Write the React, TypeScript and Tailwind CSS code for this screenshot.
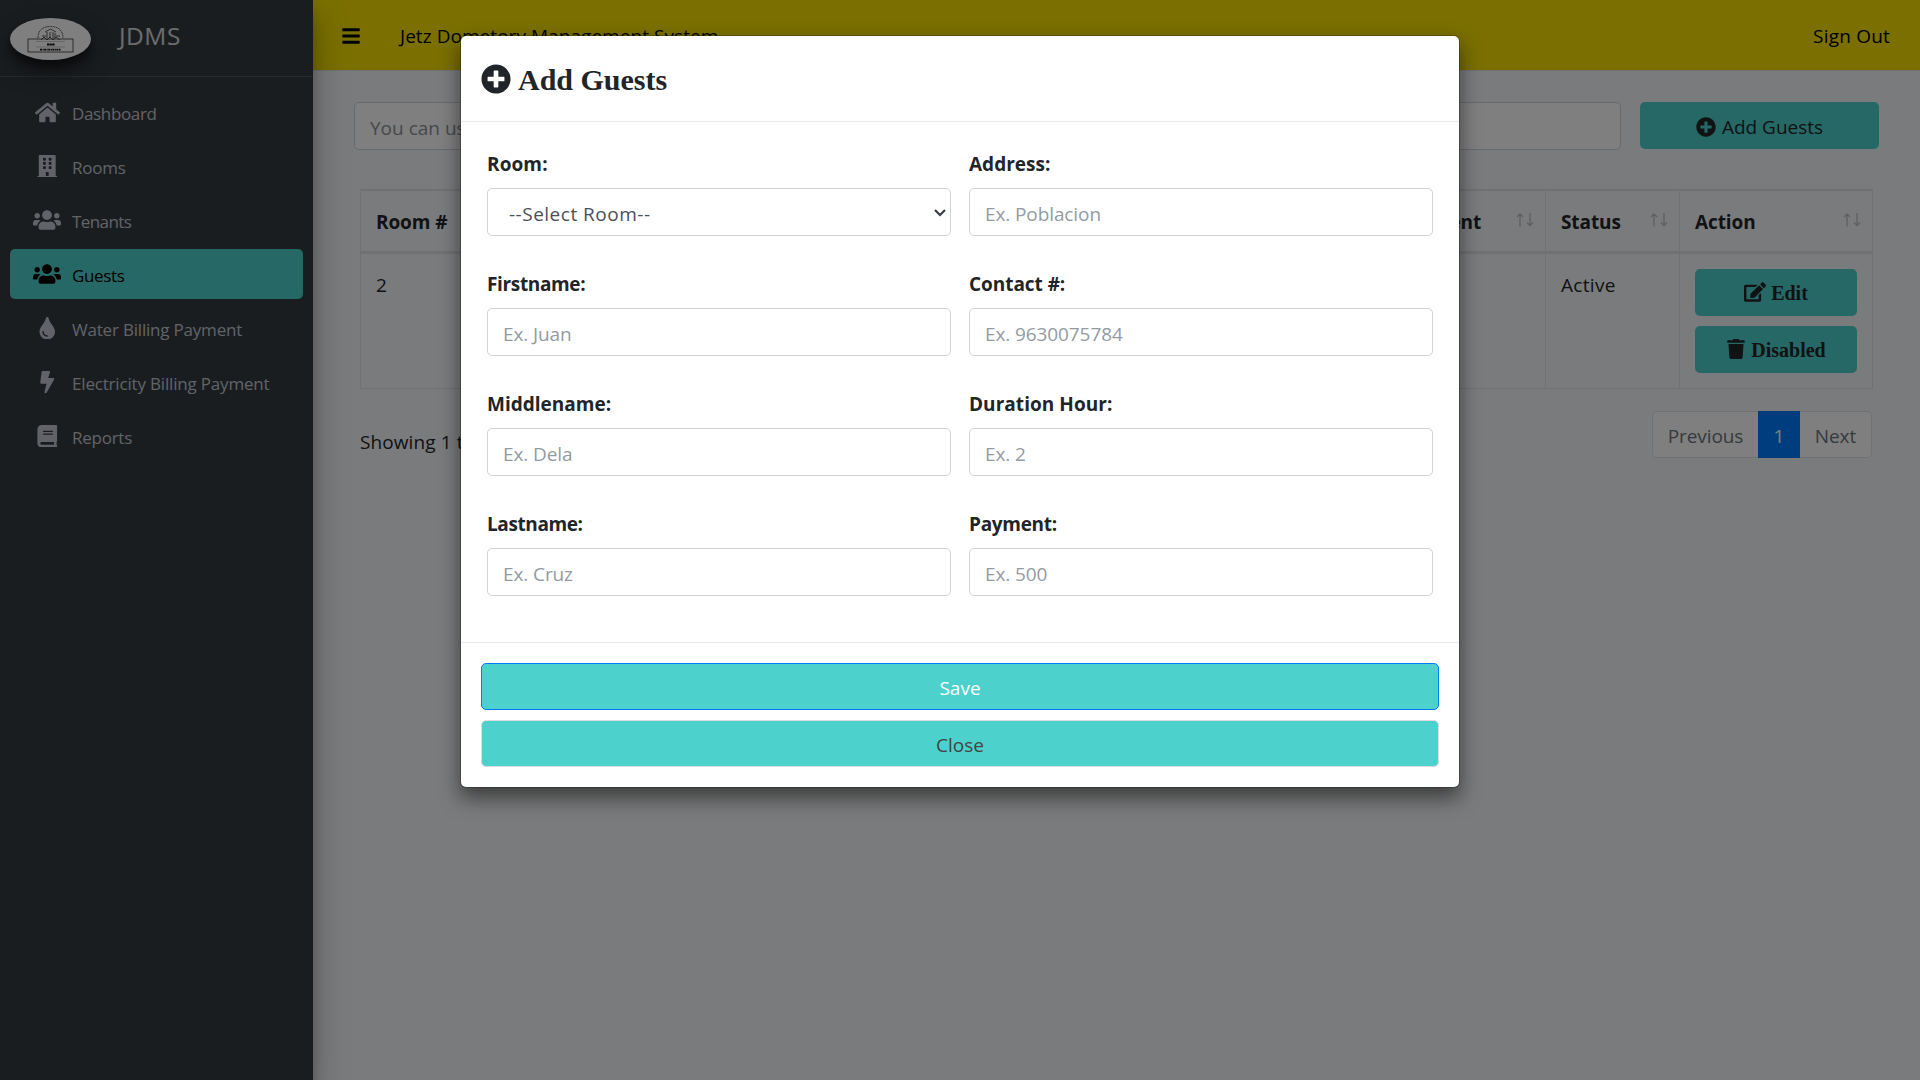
import type { ReactNode } from "react";
import {
  FaBars,
  FaBolt,
  FaBook,
  FaBuilding,
  FaEdit,
  FaHome,
  FaPlusCircle,
  FaTint,
  FaTrash,
  FaUsers,
} from "react-icons/fa";

const navItems: { label: string; icon: ReactNode; spacing: string; active?: boolean }[] = [
  { label: "Dashboard", icon: <FaHome size={25} />, spacing: "tracking-[-0.35px]" },
  { label: "Rooms", icon: <FaBuilding size={22.5} />, spacing: "tracking-[-0.25px]" },
  { label: "Tenants", icon: <FaUsers size={28} />, spacing: "tracking-[-0.6px]" },
  { label: "Guests", icon: <FaUsers size={28} />, spacing: "tracking-[-0.35px]", active: true },
  { label: "Water Billing Payment", icon: <FaTint size={22.5} />, spacing: "tracking-[-0.2px]" },
  { label: "Electricity Billing Payment", icon: <FaBolt size={22.5} />, spacing: "tracking-[-0.18px]" },
  { label: "Reports", icon: <FaBook size={22.5} />, spacing: "tracking-[-0.25px]" },
];

function Logo() {
  return (
    <div className="flex h-[42px] w-[81px] items-center justify-center rounded-[50%] bg-white shadow-[0_12px_24px_rgba(0,0,0,0.4),0_7px_8px_rgba(0,0,0,0.46)]">
      <svg width="47" height="28" viewBox="0 0 47 28" fill="none" stroke="#333" strokeWidth="0.8">
        <path d="M11 13C11 5 16 1.5 23.500 1.500S36 5 36 13" strokeDasharray="2 0.7" />
        <path d="M18 7l5.500-3 5.500 3M20 7v6M23 7v6M26 7v6M28 8v5M15 11h4M29 11h4" />
        <path d="M14 15l3-3 3 3 3-3 3 3 3-3 4 3" />
        <rect x="1" y="14" width="45" height="13" />
        <path d="M9 16.500h29M9 22h29" stroke="#999" strokeWidth="0.5" />
        <path d="M20 19.500h8" stroke="#111" strokeWidth="2.200" strokeDasharray="2.200 0.400" />
        <path d="M13 24.700h21" stroke="#111" strokeWidth="1.800" strokeDasharray="2 0.600 1 0.500" />
      </svg>
    </div>
  );
}

function Sidebar() {
  return (
    <aside className="relative z-10 h-full w-[313px] shrink-0 bg-[#343a40] shadow-[0_17px_35px_rgba(0,0,0,0.25),0_12px_12px_rgba(0,0,0,0.22)]">
      <div className="flex h-[77px] items-center border-b border-[#4b545c] pl-[10px]">
        <div className="pt-[2px]">
          <Logo />
        </div>
        <span className="pb-[4px] pl-[28px] text-[24.500px] tracking-[0.5px] text-white/80">JDMS</span>
      </div>
      <nav className="mt-[10px] flex flex-col gap-1 px-[10px]">
        {navItems.map((item) => (
          <div
            key={item.label}
            className={
              item.active
                ? "flex h-[50px] items-center rounded-[5px] bg-[#4cd1cc] pl-[20px] text-black"
                : "flex h-[50px] items-center pl-[20px] text-[#c2c7d0]"
            }
          >
            <span className="flex w-[34px] justify-center">{item.icon}</span>
            <span className={`pt-[3px] pl-[8px] text-[17px] ${item.spacing}`}>{item.label}</span>
          </div>
        ))}
      </nav>
    </aside>
  );
}

function SortArrows() {
  return (
    <svg width="18" height="14" viewBox="0 0 18 14" fill="none" stroke="#bcbec1" strokeWidth="1.300">
      <path d="M4 13.500V1M1 4l3-3 3 3M14 0v12.500M11 9.500l3 3 3-3" />
    </svg>
  );
}

const columns = ["Room #", "Fullname", "Address", "Contact #", "Duration Hour", "Payment", "Status", "Action"];
const cells = ["2", "", "", "", "", "", "Active"];

function GuestTable() {
  return (
    <div className="mt-[39px] ml-[6px] grid w-[1513px] grid-cols-[160px_220px_220px_210px_211px_164px_134px_193px] border-t-2 border-l border-[#dee2e6]">
      {columns.map((c) => (
        <div
          key={c}
          className="flex h-[63px] items-center justify-between border-r border-b-[3px] border-[#dee2e6] pr-[11px] pl-[15px]"
        >
          <span className="pt-[2px] text-[19px] font-bold tracking-[-0.1px]">{c}</span>
          <span className="-mt-[2px]">
            <SortArrows />
          </span>
        </div>
      ))}
      {cells.map((c, i) => (
        <div key={i} className="h-[135px] border-r border-b border-[#dee2e6] pt-[17px] pl-[15px] text-[19px] tracking-[0.3px]">
          {c}
        </div>
      ))}
      <div className="flex h-[135px] flex-col gap-[10px] border-r border-b border-[#dee2e6] pt-[15px] pr-[15px] pl-[15px] font-['Liberation_Serif',serif] text-[20px] font-bold">
        <button className="flex h-[47px] items-center justify-center gap-[5px] rounded-[5px] bg-[#4cd1cc]">
          <FaEdit size={22} className="-mt-[2px]" /> <span className="pt-[1px]">Edit</span>
        </button>
        <button className="flex h-[47px] items-center justify-center gap-[5px] rounded-[5px] bg-[#4cd1cc]">
          <FaTrash size={20} className="-mt-[2px]" /> <span className="pt-[1px]">Disabled</span>
        </button>
      </div>
    </div>
  );
}

function Page() {
  return (
    <div className="flex min-w-0 flex-1 flex-col">
      <header className="flex h-[71px] items-center border-b border-[#dee2e6] bg-[#f4de00] pr-[30px] pl-[28px] text-[19px] text-black">
        <FaBars size={20} className="mt-[1px]" />
        <span className="flex-1 pt-[2px] pl-[39px] tracking-[0.05px]">Jetz Dometory Management System</span>
        <span className="pt-[2px] tracking-[0.2px]">Sign Out</span>
      </header>
      <main className="pt-[31px] pl-[41px]">
        <div className="flex items-start gap-[19px]">
          <div className="flex h-[48px] w-[1267px] items-center rounded-[5px] border border-[#ced4da] bg-white pt-[5px] pl-[15px] text-[19px] text-[#8b9299]">
            You can use this search
          </div>
          <button className="flex h-[47px] w-[239px] items-center justify-center gap-[6px] rounded-[5px] bg-[#4cd1cc] text-[19px]">
            <FaPlusCircle size={20} className="mt-[2px]" />
            <span className="pt-[4px]">Add Guests</span>
          </button>
        </div>
        <GuestTable />
        <div className="flex w-[1518px] justify-between pt-[22px] pl-[6px] text-[19px]">
          <span className="pt-[17px] tracking-[0.1px]">Showing 1 to 1 of 1 entries</span>
          <div className="flex h-[47px] text-[#6c757d]">
            <span className="flex w-[106px] items-center justify-center rounded-l-[5px] border border-r-0 border-[#dee2e6] bg-white pt-[3px] tracking-[-0.1px]">
              Previous
            </span>
            <span className="flex w-[42px] items-center justify-center bg-[#007bff] pt-[3px] text-white">1</span>
            <span className="flex w-[72px] items-center justify-center rounded-r-[5px] border border-l-0 border-[#dee2e6] bg-white pt-[3px]">
              Next
            </span>
          </div>
        </div>
      </main>
    </div>
  );
}

const fields = [
  { label: "Room:", hint: "--Select Room--", spacing: "tracking-[0.1px]", select: true },
  { label: "Address:", hint: "Ex. Poblacion", spacing: "tracking-[0px]" },
  { label: "Firstname:", hint: "Ex. Juan", spacing: "tracking-[-0.35px]" },
  { label: "Contact #:", hint: "Ex. 9630075784", spacing: "tracking-[-0.05px]" },
  { label: "Middlename:", hint: "Ex. Dela", spacing: "tracking-[0px]" },
  { label: "Duration Hour:", hint: "Ex. 2", spacing: "tracking-[0.05px]" },
  { label: "Lastname:", hint: "Ex. Cruz", spacing: "tracking-[-0.4px]" },
  { label: "Payment:", hint: "Ex. 500", spacing: "tracking-[-0.3px]" },
];

function AddGuestsModal() {
  return (
    <div className="h-[753px] w-[1000px] rounded-[6px] border border-black/20 bg-white bg-clip-padding shadow-[0_10px_20px_rgba(0,0,0,0.5)]">
      <div className="flex h-[86px] items-center gap-[7px] border-b border-[#e9ecef] pl-[20px] font-['Liberation_Serif',serif] text-[30px] font-bold">
        <FaPlusCircle size={30} />
        <span className="pt-[2px]">Add Guests</span>
      </div>
      <div className="grid h-[520px] grid-cols-[464px_464px] content-start gap-x-[18px] pt-[28px] pl-[26px]">
        {fields.map((f) => (
          <div key={f.label} className="h-[120px] text-[19px]">
            <div className={`h-[38px] font-bold ${f.spacing}`}>{f.label}</div>
            {f.select ? (
              <div className="flex h-[48px] items-center justify-between rounded-[5px] border border-[#ced4da] pt-[4px] pr-[4px] pl-[21px] tracking-[0.5px] text-[#495057]">
                {f.hint}
                <svg width="12" height="8" viewBox="0 0 12 8" className="-mt-[3px]" fill="none" stroke="#343a40" strokeWidth="2">
                  <path d="M1 1l5 5 5-5" />
                </svg>
              </div>
            ) : (
              <div className="flex h-[48px] items-center rounded-[5px] border border-[#ced4da] pt-[4px] pl-[15px] tracking-[-0.1px] text-[#939ba2]">
                {f.hint}
              </div>
            )}
          </div>
        ))}
      </div>
      <div className="flex flex-col gap-[10px] border-t border-[#e9ecef] px-[20px] pt-[20px] text-[19px]">
        <button className="h-[47px] rounded-[5px] border border-[#007bff] bg-[#4cd1cc] pt-[4px] text-white">Save</button>
        <button className="h-[47px] rounded-[5px] border border-[#ddd] bg-[#4cd1cc] pt-[4px] text-[#444]">Close</button>
      </div>
    </div>
  );
}

export default function App() {
  return (
    <div className="relative h-[1080px] w-[1920px] overflow-hidden bg-[#f4f6f9] font-['Open_Sans','Noto_Sans',sans-serif] text-[#212529]">
      <div className="flex h-full">
        <Sidebar />
        <Page />
      </div>
      <div className="absolute inset-0 z-20 flex items-start justify-center bg-black/50 pt-[35px]">
        <AddGuestsModal />
      </div>
    </div>
  );
}
